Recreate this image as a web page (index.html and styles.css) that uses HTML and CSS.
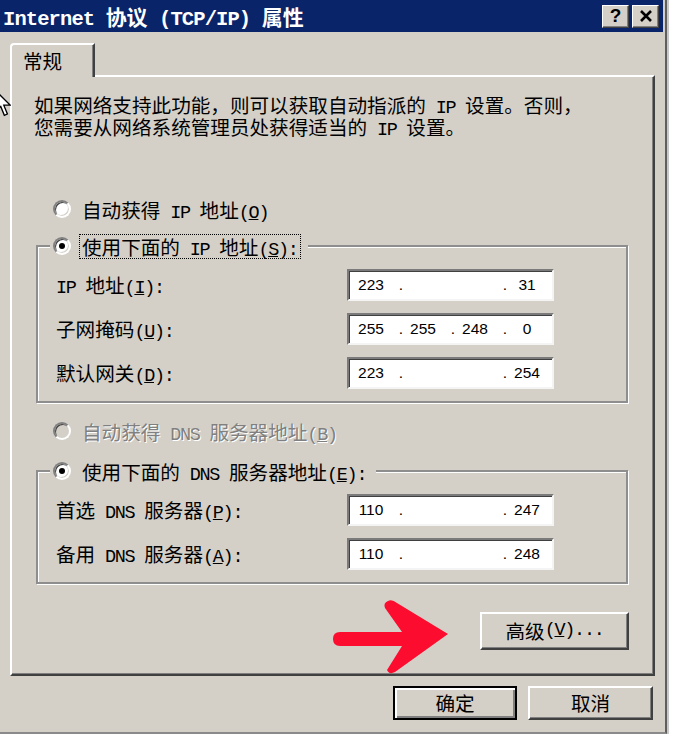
FILE: index.html
```html
<!DOCTYPE html>
<html lang="zh-CN">
<head>
<meta charset="utf-8">
<title>Internet 协议 (TCP/IP) 属性</title>
<link rel="stylesheet" href="styles.css">
</head>
<body>
<div class="window">
  <div class="titlebar">
    <div class="title"><span class="tl">Internet </span>协议<span class="tl"> (TCP/IP) </span>属性</div>
    <div class="tbtns">
      <div class="tbtn">?</div>
      <div class="tbtn"><svg width="14" height="12" viewBox="0 0 14 12"><path d="M2 1 L12 11 M12 1 L2 11" stroke="#000" stroke-width="2.6" fill="none"/></svg></div>
    </div>
  </div>

  <div class="main">
    <div class="tab">常规</div>
    <div class="panel">
      <p class="intro">如果网络支持此功能，则可以获取自动指派的<span class="l"> IP </span>设置。否则，<br>您需要从网络系统管理员处获得适当的<span class="l"> IP </span>设置。</p>

      <div class="opt first"><span class="radio"></span><span class="cap">自动获得<span class="l"> IP </span>地址<span class="l">(<u>O</u>)</span></span></div>

      <fieldset class="group g1">
        <legend><div class="opt"><span class="radio on"></span><span class="cap focus">使用下面的<span class="l"> IP </span>地址<span class="l">(<u>S</u>):</span></span></div></legend>
        <div class="field">
          <span class="lbl"><span class="l">IP </span>地址<span class="l">(<u>I</u>):</span></span>
          <div class="ip"><span class="oct">223</span><span class="dot">.</span><span class="oct"></span><span class="dot"></span><span class="oct"></span><span class="dot">.</span><span class="oct">31</span></div>
        </div>
        <div class="field">
          <span class="lbl">子网掩码<span class="l">(<u>U</u>):</span></span>
          <div class="ip"><span class="oct">255</span><span class="dot">.</span><span class="oct">255</span><span class="dot">.</span><span class="oct">248</span><span class="dot">.</span><span class="oct">0</span></div>
        </div>
        <div class="field">
          <span class="lbl">默认网关<span class="l">(<u>D</u>):</span></span>
          <div class="ip"><span class="oct">223</span><span class="dot">.</span><span class="oct"></span><span class="dot"></span><span class="oct"></span><span class="dot">.</span><span class="oct">254</span></div>
        </div>
      </fieldset>

      <div class="opt third disabled"><span class="radio dis"></span><span class="cap">自动获得<span class="l"> DNS </span>服务器地址<span class="l">(<u>B</u>)</span></span></div>

      <fieldset class="group g2">
        <legend><div class="opt"><span class="radio on"></span><span class="cap">使用下面的<span class="l"> DNS </span>服务器地址<span class="l">(<u>E</u>):</span></span></div></legend>
        <div class="field">
          <span class="lbl">首选<span class="l"> DNS </span>服务器<span class="l">(<u>P</u>):</span></span>
          <div class="ip"><span class="oct">110</span><span class="dot">.</span><span class="oct"></span><span class="dot"></span><span class="oct"></span><span class="dot">.</span><span class="oct">247</span></div>
        </div>
        <div class="field">
          <span class="lbl">备用<span class="l"> DNS </span>服务器<span class="l">(<u>A</u>):</span></span>
          <div class="ip"><span class="oct">110</span><span class="dot">.</span><span class="oct"></span><span class="dot"></span><span class="oct"></span><span class="dot">.</span><span class="oct">248</span></div>
        </div>
      </fieldset>

      <button class="btn adv">高级<span class="l">(<u>V</u>)...</span></button>
    </div>
  </div>

  <div class="actions">
    <button class="btn default ok">确定</button>
    <button class="btn cancel">取消</button>
  </div>

  <svg class="arrow" width="122" height="78" viewBox="0 0 122 78">
    <path d="M58 3 Q62 1 67 5 L118 36 L65 74 Q59 77 57 72 L72 48 L10 48 Q3 48 3 41 Q3 34 10 34 L72 34 L55 10 Q53 5 58 3 Z" fill="#fc0d2f"/>
  </svg>

  <svg class="cursor" width="16" height="28" viewBox="0 0 12 21">
    <path d="M0.5 0.5 L0.5 16 L4.3 12.3 L7 19 L9.3 18 L6.6 11.4 L11.5 11.4 Z" fill="#fff" stroke="#000" stroke-width="1"/>
  </svg>
</div>
<div class="desk"></div>
</body>
</html>
```

FILE: styles.css
```css
* {
  box-sizing: border-box;
}

html,
body {
  margin: 0;
}

body {
  width: 673px;
  height: 734px;
  overflow: hidden;
  display: flex;
  background: #fff;
  color: #000;
  font-family: "Noto Sans CJK SC", "Noto Sans CJK JP", sans-serif;
  font-size: 19.6px;
}

.l {
  font-family: "Liberation Mono", "DejaVu Sans Mono", monospace;
  font-size: 18.5px;
  letter-spacing: -1.3px;
  line-height: 0;
}

.window {
  position: relative;
  flex: none;
  width: 667px;
  height: 734px;
  overflow: hidden;
  display: flex;
  flex-direction: column;
  background: #d4d0c8;
  border-right: 2px solid #5e5e5e;
  border-bottom: 2px solid #8a8a8a;
}

/* title bar */
.titlebar {
  flex: none;
  height: 32px;
  margin-right: 2px;
  padding: 0 4px 0 3px;
  display: flex;
  align-items: center;
  background: #0a246a;
  color: #fff;
}

.title {
  flex: 1;
  white-space: pre;
  font-size: 21px;
  font-weight: 700;
  line-height: 32px;
}

.tl {
  font-family: "Liberation Mono", "DejaVu Sans Mono", monospace;
  font-size: 20.5px;
  letter-spacing: -0.9px;
  font-weight: 700;
  line-height: 0;
}

.tbtns {
  display: flex;
  gap: 3px;
}

.tbtn {
  width: 27px;
  height: 23px;
  display: flex;
  align-items: center;
  justify-content: center;
  background: #d4d0c8;
  border: 1px solid;
  border-color: #fff #404040 #404040 #fff;
  box-shadow: inset -1px -1px 0 #808080;
  color: #000;
  font: 700 19px "Liberation Sans", sans-serif;
}

/* tab control */
.main {
  flex: none;
  padding: 11px 10px 0 10px;
}

.tab {
  position: relative;
  z-index: 1;
  width: 85px;
  height: 34px;
  margin-bottom: -2px;
  padding: 2px 0 0 11px;
  line-height: 27px;
  background: #d4d0c8;
  border-top: 2px solid #fff;
  border-left: 2px solid #fff;
  border-right: 2px solid #404040;
  border-top-left-radius: 4px;
  box-shadow: inset -1px 0 0 #808080;
}

.panel {
  width: 645px;
  height: 601px;
  padding: 17px 24px 0 22px;
  display: flex;
  flex-direction: column;
  align-items: flex-start;
  border-top: 2px solid #fff;
  border-left: 2px solid #fff;
  border-right: 2px solid #404040;
  border-bottom: 2px solid #404040;
  box-shadow: inset -1px -1px 0 #808080;
}

.intro {
  margin: 0;
  line-height: 22px;
  white-space: nowrap;
}

/* radio options */
.opt {
  display: flex;
  align-items: center;
  gap: 8px;
  height: 26px;
  white-space: nowrap;
}

.opt.first {
  margin: 58px 0 0 19px;
}

.opt.third {
  margin: 15px 0 0 19px;
}

.cap {
  padding: 0 2px;
  border: 1px dotted transparent;
  line-height: 23px;
}

.cap.focus {
  border-color: #000;
}

.disabled {
  color: #808080;
  text-shadow: 1px 1px 0 #fff;
}

.radio {
  flex: none;
  width: 18px;
  height: 18px;
  display: flex;
  align-items: center;
  justify-content: center;
  border-radius: 50%;
  background: #fff;
  border: 2px solid;
  border-color: #808080 #fff #fff #808080;
  box-shadow: inset 1px 1px 0 #404040, inset -1px -1px 0 #d4d0c8;
}

.radio.on::after {
  content: "";
  width: 6px;
  height: 6px;
  border-radius: 50%;
  background: #000;
}

.radio.dis {
  background: #d4d0c8;
}

/* group boxes */
.group {
  width: 592px;
  min-width: 0;
  margin: 11px 0 0 2px;
  padding: 10px 12px 12px 18px;
  border: 2px solid #8e8e8e;
  box-shadow: inset 1px 1px 0 #fff, 1px 1px 0 #fff;
}

.group.g2 {
  margin-top: 14px;
}

.group legend {
  margin-left: -6px;
  padding: 0 7px 0 3px;
  background: #d4d0c8;
}

.field {
  display: flex;
  align-items: center;
  height: 32px;
}

.field + .field {
  margin-top: 12px;
}

.lbl {
  flex: none;
  width: 291px;
  white-space: nowrap;
  line-height: 24px;
}

.ip {
  width: 207px;
  height: 32px;
  padding-left: 2px;
  display: flex;
  align-items: center;
  background: #fff;
  border: 2px solid;
  border-color: #7b7b7b #f4f4f4 #f4f4f4 #7b7b7b;
  box-shadow: inset 1px 1px 0 #404040;
  font: 15.5px "Liberation Sans", sans-serif;
}

.oct {
  width: 40px;
  text-align: center;
}

.dot {
  width: 12px;
  text-align: right;
}

/* buttons */
.btn {
  padding: 0;
  display: flex;
  align-items: center;
  justify-content: center;
  background: #d4d0c8;
  color: #000;
  font: inherit;
  line-height: 24px;
  border: 2px solid;
  border-color: #fff #404040 #404040 #fff;
  box-shadow: inset -1px -1px 0 #808080;
  white-space: nowrap;
}

.btn.default {
  border: 2px solid #000;
  box-shadow: inset 2px 2px 0 #fff, inset -2px -2px 0 #808080;
}

.adv {
  align-self: flex-end;
  width: 149px;
  height: 38px;
  margin-top: 28px;
}

.actions {
  flex: none;
  display: flex;
  justify-content: flex-end;
  gap: 11px;
  margin-top: 10px;
  padding-right: 12px;
}

.actions .btn {
  height: 34px;
}

.ok {
  width: 124px;
}

.cancel {
  width: 125px;
}

/* overlays */
.arrow {
  position: absolute;
  left: 330px;
  top: 598px;
}

.cursor {
  position: absolute;
  left: -5px;
  top: 90px;
}

/* desktop strip behind the window */
.desk {
  flex: 1;
  background: #fff;
  box-shadow: inset 2px 0 0 #c8c8c8;
}
```
